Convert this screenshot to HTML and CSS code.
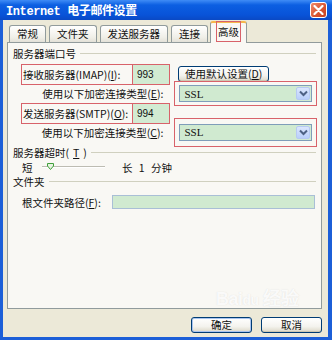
FILE: index.html
```html
<!DOCTYPE html>
<html lang="zh-CN">
<head>
    <meta charset="UTF-8">
    <title>Internet 电子邮件设置</title>
    <link rel="stylesheet" href="styles.css">
</head>
<body>
    <div class="window">
        <!-- Title bar -->
        <div class="titlebar">
            <span class="title">Internet 电子邮件设置</span>
            <span class="close">
                <svg width="11" height="10" viewBox="0 0 11 10"><path d="M1.5 1 L9.5 9 M9.5 1 L1.5 9" stroke="#fff" stroke-width="2.2" stroke-linecap="round"/></svg>
            </span>
        </div>

        <div class="client">
            <!-- Tabs -->
            <div class="tabs">
                <div class="tab">常规</div>
                <div class="tab">文件夹</div>
                <div class="tab">发送服务器</div>
                <div class="tab">连接</div>
                <div class="tab active"><span class="mark">高级</span></div>
            </div>

            <!-- Tab panel -->
            <div class="panel">
                <div class="group">服务器端口号</div>

                <div class="row row-in">
                    <span class="lbl mark">接收服务器(IMAP)(<u>I</u>):</span>
                    <span class="field mark">993</span>
                    <span class="btn">使用默认设置(<u>D</u>)</span>
                </div>
                <div class="row row-enc">
                    <span class="lbl-r">使用以下加密连接类型(<u>E</u>):</span>
                    <span class="combo-box mark">
                        <span class="combo">SSL<span class="arrow"><svg width="9" height="7" viewBox="0 0 9 7"><path d="M1 1.5 L4.5 5 L8 1.5" fill="none" stroke="#4d6185" stroke-width="2"/></svg></span></span>
                    </span>
                </div>
                <div class="row row-out">
                    <span class="lbl mark">发送服务器(SMTP)(<u>O</u>):</span>
                    <span class="field mark">994</span>
                </div>
                <div class="row row-enc2">
                    <span class="lbl-r">使用以下加密连接类型(<u>C</u>):</span>
                    <span class="combo-box tall mark">
                        <span class="combo">SSL<span class="arrow"><svg width="9" height="7" viewBox="0 0 9 7"><path d="M1 1.5 L4.5 5 L8 1.5" fill="none" stroke="#4d6185" stroke-width="2"/></svg></span></span>
                    </span>
                </div>

                <div class="group gap">服务器超时(<u>T</u>)</div>
                <div class="row slider-row">
                    <span class="short">短</span>
                    <span class="slider">
                        <svg class="thumb" width="7" height="7" viewBox="0 0 7 7"><path d="M0.5 0.5 H6.5 V3 L3.5 6.5 L0.5 3 Z" fill="#e7f3e1" stroke="#3fa03a"/></svg>
                    </span>
                    <span class="long">长 1 分钟</span>
                </div>

                <div class="group">文件夹</div>
                <div class="row path-row">
                    <span class="lbl-path">根文件夹路径(<u>F</u>):</span>
                    <span class="path"></span>
                </div>
            </div>

            <!-- Buttons -->
            <div class="footer">
                <span class="btn wide default">确定</span>
                <span class="btn wide">取消</span>
            </div>
        </div>

        <div class="watermark">Bai<span>du</span> 经验</div>
    </div>
</body>
</html>
```

FILE: styles.css
```css
/* General */
body {
    margin: 0;
    font-family: "Noto Sans CJK SC", sans-serif;
    font-size: 10.5px;
    color: #111;
}

.window {
    position: relative;
    width: 332px;
    height: 340px;
    display: flex;
    flex-direction: column;
    background-color: #1c5fd8;
}

/* Title bar */
.titlebar {
    height: 20px;
    display: flex;
    align-items: center;
    justify-content: space-between;
    padding: 0 5px 0 6px;
    background: linear-gradient(#3f8cf6, #0c5fe2 25%, #0853d8 75%, #0a49c4);
}

.title {
    color: #fff;
    font: bold 12px "Liberation Mono", "Noto Sans CJK SC", monospace;
    letter-spacing: -0.4px;
}

.close {
    width: 15px;
    height: 14px;
    display: flex;
    align-items: center;
    justify-content: center;
    border: 1px solid #fff;
    border-radius: 3px;
    background: linear-gradient(135deg, #f08a6a, #d8532f 60%, #c44322);
}

/* Window body */
.client {
    flex: 1;
    display: flex;
    flex-direction: column;
    background-color: #ece9d8;
    margin: 0 4px 3px 3px;
    padding: 2px 6px 0 4px;
}

/* Tabs */
.tabs {
    height: 20px;
    display: flex;
    align-items: flex-end;
    padding-left: 2px;
}

.tab {
    height: 16px;
    line-height: 15px;
    padding: 0 7px;
    margin-right: 3px;
    border: 1px solid #919b9c;
    border-bottom: none;
    border-radius: 3px 3px 0 0;
    background: linear-gradient(#ffffff, #f0efe8 70%, #e3e1d8);
}

.tab.active {
    height: 20px;
    line-height: 18px;
    margin-left: -1px;
    margin-bottom: -1px;
    padding: 0 6px;
    border-top: 2px solid #f5b84d;
    background: #f9f8f4;
    position: relative;
}

.tab.active .mark {
    display: inline-block;
    padding: 0 1px;
    line-height: 19px;
    margin-top: -2px;
}

.mark {
    outline: 1px solid #d8626a;
}

/* Panel */
.panel {
    height: 267px;
    box-sizing: border-box;
    border: 1px solid #919b9c;
    background-color: #f9f8f4;
    padding: 3px 5px 0 5px;
}

.group {
    height: 14px;
    display: flex;
    align-items: center;
    gap: 4px;
}

.group::after {
    content: "";
    flex: 1;
    border-top: 1px solid #d0d0bf;
}

.group.gap {
    margin-top: 4px;
}

.row {
    display: flex;
    align-items: center;
    padding-left: 9px;
}

.row-in {
    height: 20px;
    margin-top: 4px;
}

.row-enc {
    height: 19px;
}

.row-out {
    height: 20px;
}

.row-enc2 {
    height: 18px;
}

.lbl {
    width: 109px;
    height: 19px;
    line-height: 19px;
    padding-left: 1px;
    margin-right: 1px;
    white-space: nowrap;
}

.lbl-r {
    width: 143px;
    text-align: right;
    white-space: nowrap;
}

.field {
    width: 32px;
    height: 19px;
    line-height: 19px;
    padding-left: 4px;
    margin-right: 9px;
    background-color: #d2ebd2;
    font-family: "Liberation Sans", sans-serif;
    font-size: 10px;
}

/* Buttons */
.btn {
    height: 14px;
    line-height: 13px;
    padding: 0 6px;
    border: 1px solid #003c74;
    border-radius: 3px;
    background: linear-gradient(#ffffff, #f4f3ee 60%, #dcd8c8);
    box-shadow: inset 0 -1px 0 #cdc8b3;
    white-space: nowrap;
}

/* Combo boxes */
.combo-box {
    width: 134px;
    height: 17px;
    margin-left: 12px;
    padding: 3px 4px 3px 4px;
}

.combo-box.tall {
    padding: 5px 4px 5px 4px;
}

.combo {
    height: 17px;
    box-sizing: border-box;
    display: flex;
    align-items: center;
    justify-content: space-between;
    padding: 0 1px 0 4px;
    border: 1px solid #7f9db9;
    background-color: #d0ead0;
    font-family: "Liberation Serif", serif;
    font-size: 11px;
}

.arrow {
    width: 14px;
    height: 13px;
    display: flex;
    align-items: center;
    justify-content: center;
    border-radius: 2px;
    border: 1px solid #b6c9f3;
    box-sizing: border-box;
    background: linear-gradient(#dbe6fd, #b9cffb);
}

/* Slider */
.slider-row {
    height: 14px;
    margin-top: 1px;
}

.short {
    width: 20px;
}

.slider {
    position: relative;
    width: 63px;
    height: 2px;
    border-top: 1px solid #bdbcb2;
    border-bottom: 1px solid #fff;
    box-sizing: border-box;
}

.thumb {
    position: absolute;
    left: 5px;
    top: -4px;
}

.long {
    margin-left: 17px;
    word-spacing: 4px;
}

.group + .path-row {
    margin-top: 6px;
}

.path-row {
    height: 16px;
}

.lbl-path {
    width: 90px;
    white-space: nowrap;
}

.path {
    width: 203px;
    height: 14px;
    box-sizing: border-box;
    border: 1px solid #a9bfd6;
    background-color: #d0ead0;
}

/* Footer */
.footer {
    display: flex;
    justify-content: flex-end;
    gap: 9px;
    padding-top: 8px;
}

.btn.wide {
    width: 47px;
    height: 14px;
    text-align: center;
}

.btn.default {
    box-shadow: inset 0 0 0 1px #a9c4ef, inset 0 -1px 0 #8fb0e6;
}

/* Watermark */
.watermark {
    position: absolute;
    left: 216px;
    top: 284px;
    color: rgba(255, 255, 255, 0.85);
    font: bold 18px "Liberation Sans", sans-serif;
    text-shadow: 0 0 1px rgba(170, 170, 170, 0.35);
    letter-spacing: -0.5px;
}

.watermark span {
    font-size: 14px;
}
```
